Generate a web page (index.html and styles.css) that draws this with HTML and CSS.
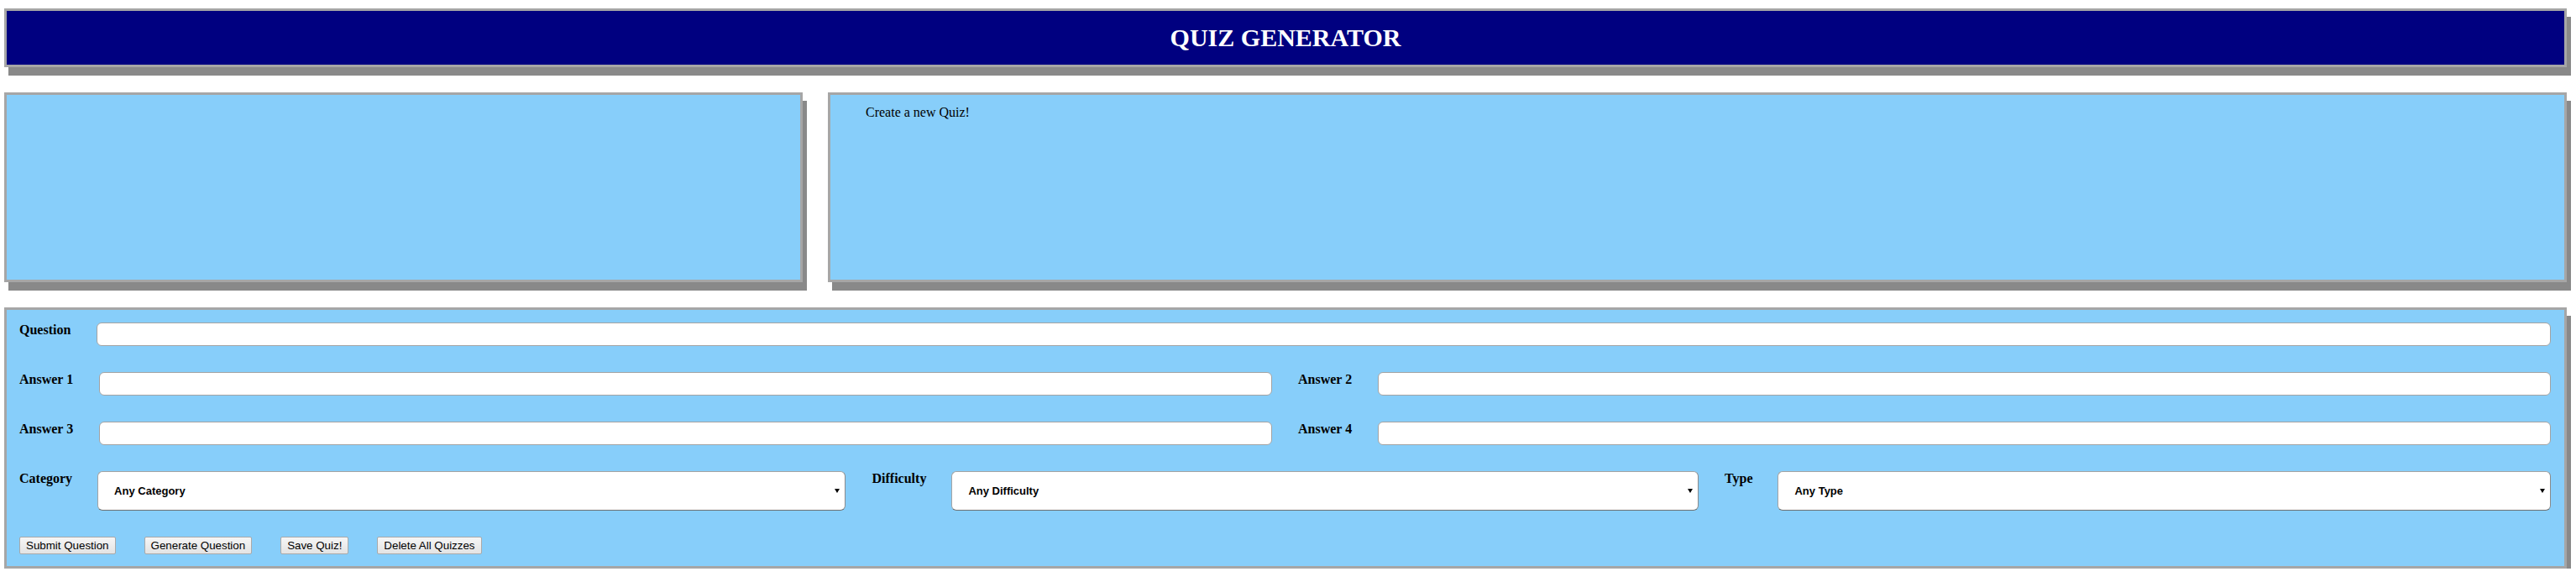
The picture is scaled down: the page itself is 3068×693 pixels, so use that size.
FILE: index.html
```html
<!DOCTYPE html>
<html lang="en">
<head>
<meta charset="utf-8">
<title>Quiz Generator</title>
<link rel="stylesheet" href="styles.css">
</head>
<body>
  <header class="banner">
    <h1>QUIZ GENERATOR</h1>
  </header>

  <section class="top">
    <div class="panel quiz-list"></div>
    <div class="panel quiz-view">
      <p class="intro">Create a new Quiz!</p>
    </div>
  </section>

  <section class="panel builder">
    <div class="row">
      <label class="lbl">Question</label>
      <input class="txt" type="text">
    </div>
    <div class="row">
      <label class="lbl">Answer 1</label>
      <input class="txt" type="text">
      <label class="lbl">Answer 2</label>
      <input class="txt" type="text">
    </div>
    <div class="row">
      <label class="lbl">Answer 3</label>
      <input class="txt" type="text">
      <label class="lbl">Answer 4</label>
      <input class="txt" type="text">
    </div>
    <div class="selects">
      <div class="field">
        <label class="lbl">Category</label>
        <div class="select-wrap">
          <select class="sel"><option>Any Category</option></select>
        </div>
      </div>
      <div class="field">
        <label class="lbl">Difficulty</label>
        <div class="select-wrap">
          <select class="sel"><option>Any Difficulty</option></select>
        </div>
      </div>
      <div class="field">
        <label class="lbl">Type</label>
        <div class="select-wrap">
          <select class="sel"><option>Any Type</option></select>
        </div>
      </div>
    </div>
    <div class="actions">
      <button class="btn" type="button">Submit Question</button>
      <button class="btn" type="button">Generate Question</button>
      <button class="btn" type="button">Save Quiz!</button>
      <button class="btn" type="button">Delete All Quizzes</button>
    </div>
  </section>
</body>
</html>
```
FILE: styles.css
```css
* {
  box-sizing: border-box;
}

html, body {
  background: #ffffff;
}

body {
  margin: 0;
  padding: 10px 11px 0 5px;
  font-family: "Liberation Serif", "Times New Roman", serif;
  color: #000000;
}

.banner {
  height: 70px;
  background: #000080;
  border: 3px solid #a6a6a6;
  box-shadow: 5px 10px 0 #898989;
  display: flex;
  align-items: center;
  justify-content: center;
}

.banner h1 {
  margin: 0;
  color: #ffffff;
  font-size: 30px;
  font-weight: bold;
  line-height: normal;
}

.top {
  display: grid;
  grid-template-columns: 951px 1fr;
  gap: 30px;
  margin-top: 30px;
}

.panel {
  background: #87cefa;
  border: 3px solid #a6a6a6;
  box-shadow: 5px 10px 0 #898989;
}

.top .panel {
  height: 226px;
}

.quiz-view {
  padding: 12px 0 0 42px;
}

.intro {
  margin: 0;
  font-size: 16px;
}

.builder {
  margin-top: 30px;
  padding: 15px 16px 14px 15px;
  display: flex;
  flex-direction: column;
  gap: 31px;
}

.row {
  display: flex;
  align-items: flex-start;
  gap: 31px;
}

.lbl {
  font-size: 16px;
  font-weight: bold;
  white-space: nowrap;
  line-height: normal;
}

.txt {
  flex: 1;
  min-width: 0;
  height: 28px;
  margin: 0;
  border: 1px solid #a3a3a3;
  border-radius: 6px;
  background: #ffffff;
  font: 13.33px "Liberation Sans", Arial, sans-serif;
}

.selects {
  display: grid;
  grid-template-columns: repeat(3, 1fr);
  gap: 31.5px;
}

.field {
  display: flex;
  align-items: flex-start;
  gap: 30px;
}

.select-wrap {
  flex: 1;
  position: relative;
}

.sel {
  display: block;
  width: 100%;
  height: 47px;
  margin: 0;
  padding: 0 20px 0 19px;
  -webkit-appearance: none;
  appearance: none;
  background: #ffffff;
  border: 1px solid #a3a3a3;
  border-right-color: #8a8a8a;
  border-bottom-color: #6f6f6f;
  border-radius: 6px;
  font: bold 13px "Liberation Sans", Arial, sans-serif;
  color: #000000;
}

.select-wrap::after {
  content: "";
  position: absolute;
  right: 7px;
  top: 21px;
  border-left: 3px solid transparent;
  border-right: 3px solid transparent;
  border-top: 5px solid #000000;
  pointer-events: none;
}

.actions {
  display: flex;
  gap: 34px;
}

.btn {
  height: 21px;
  margin: 0;
  padding: 0 7px;
  border: 1px solid #a9a9a9;
  border-radius: 2px;
  background: linear-gradient(#f6f6f6, #e3e3e3);
  font: 13.33px "Liberation Sans", Arial, sans-serif;
  color: #000000;
}
```
